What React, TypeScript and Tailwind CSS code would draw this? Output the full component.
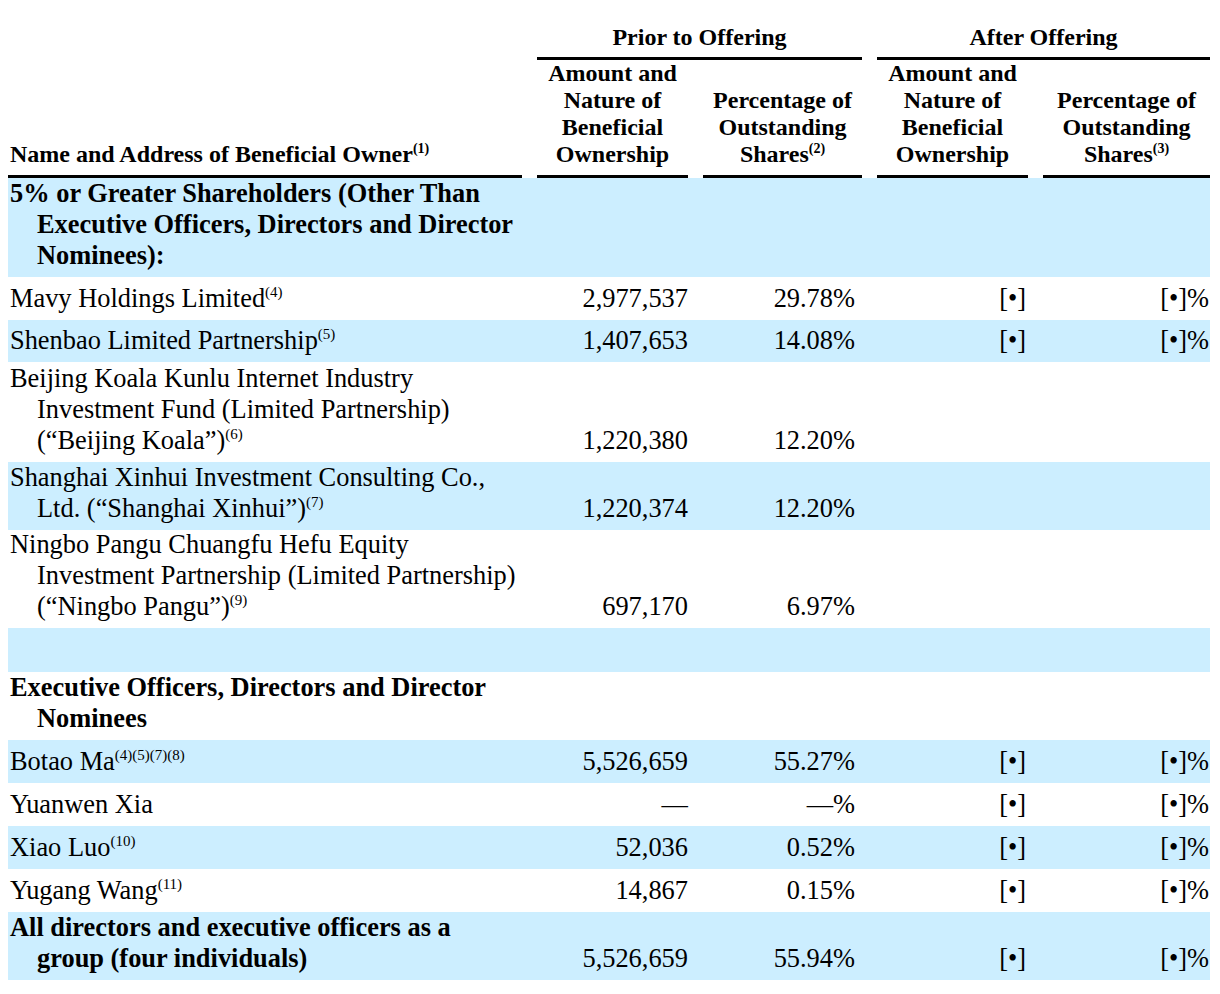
import React from "react";

const Sup = ({ children, h }: { children: React.ReactNode; h?: boolean }) => (
  <sup className={h ? "text-[14px] -top-[9px]" : "text-[15px] -top-[10px]"}>{children}</sup>
);

type RowProps = {
  blue?: boolean;
  h: string;
  bold?: boolean;
  name?: React.ReactNode;
  amt?: React.ReactNode;
  pct?: React.ReactNode;
  aAmt?: React.ReactNode;
  aPct?: React.ReactNode;
};

function Row({ blue, h, bold, name, amt, pct, aAmt, aPct }: RowProps) {
  return (
    <div
      className={`flex gap-[15px] items-end pb-[6px] leading-[31px] ${h} ${blue ? "bg-[#cceeff]" : ""}`}
    >
      <div className={`w-[514px] pl-[29px] indent-[-27px] whitespace-nowrap ${bold ? "font-bold" : ""}`}>{name}</div>
      <div className="w-[151px] text-right">{amt}</div>
      <div className="w-[159px] text-right pr-[7px]">{pct}</div>
      <div className="w-[151px] text-right pr-[2px]">{aAmt}</div>
      <div className="w-[167px] text-right pr-[1px]">{aPct}</div>
    </div>
  );
}

const B = "[•]";
const BP = "[•]%";

export default function App() {
  return (
    <div
      className="bg-white text-black pl-[8px] pt-[24px] min-h-[994px]"
      style={{ fontFamily: '"Liberation Serif", "Times New Roman", serif' }}
    >
      <div className="w-[1202px]">
        {/* Header */}
        <div className="flex gap-[15px] font-bold text-[24px] leading-[27px]">
          <div className="w-[514px] flex items-end border-b-[3px] border-black pl-[2px] pb-[7px] whitespace-nowrap">
            <span>
              Name and Address of Beneficial Owner<Sup h>(1)</Sup>
            </span>
          </div>
          <div className="w-[325px] flex flex-col">
            <div className="text-center pb-[6px] border-b-[3px] border-black">Prior to Offering</div>
            <div className="flex gap-[15px] flex-1">
              <div className="w-[151px] text-center border-b-[3px] border-black pb-[7px]">
                Amount and
                <br />
                Nature of
                <br />
                Beneficial
                <br />
                Ownership
              </div>
              <div className="w-[159px] text-center border-b-[3px] border-black pb-[7px] flex flex-col justify-end">
                <span>
                  Percentage of
                  <br />
                  Outstanding
                  <br />
                  Shares<Sup h>(2)</Sup>
                </span>
              </div>
            </div>
          </div>
          <div className="w-[333px] flex flex-col">
            <div className="text-center pb-[6px] border-b-[3px] border-black">After Offering</div>
            <div className="flex gap-[15px] flex-1">
              <div className="w-[151px] text-center border-b-[3px] border-black pb-[7px]">
                Amount and
                <br />
                Nature of
                <br />
                Beneficial
                <br />
                Ownership
              </div>
              <div className="w-[167px] text-center border-b-[3px] border-black pb-[7px] flex flex-col justify-end">
                <span>
                  Percentage of
                  <br />
                  Outstanding
                  <br />
                  Shares<Sup h>(3)</Sup>
                </span>
              </div>
            </div>
          </div>
        </div>

        {/* Body */}
        <div className="text-[26.4px]">
          <Row
            blue
            bold
            h="h-[99px]"
            name={
              <>
                5% or Greater Shareholders (Other Than
                <br />
                Executive Officers, Directors and Director
                <br />
                Nominees):
              </>
            }
          />
          <Row
            h="h-[43px]"
            name={
              <>
                Mavy Holdings Limited<Sup>(4)</Sup>
              </>
            }
            amt="2,977,537"
            pct="29.78%"
            aAmt={B}
            aPct={BP}
          />
          <Row
            blue
            h="h-[42px]"
            name={
              <>
                Shenbao Limited Partnership<Sup>(5)</Sup>
              </>
            }
            amt="1,407,653"
            pct="14.08%"
            aAmt={B}
            aPct={BP}
          />
          <Row
            h="h-[100px]"
            name={
              <>
                Beijing Koala Kunlu Internet Industry
                <br />
                Investment Fund (Limited Partnership)
                <br />
                (“Beijing Koala”)<Sup>(6)</Sup>
              </>
            }
            amt="1,220,380"
            pct="12.20%"
          />
          <Row
            blue
            h="h-[68px]"
            name={
              <>
                Shanghai Xinhui Investment Consulting Co.,
                <br />
                Ltd. (“Shanghai Xinhui”)<Sup>(7)</Sup>
              </>
            }
            amt="1,220,374"
            pct="12.20%"
          />
          <Row
            h="h-[98px]"
            name={
              <>
                Ningbo Pangu Chuangfu Hefu Equity
                <br />
                Investment Partnership (Limited Partnership)
                <br />
                (“Ningbo Pangu”)<Sup>(9)</Sup>
              </>
            }
            amt="697,170"
            pct="6.97%"
          />
          <Row blue h="h-[44px]" />
          <Row
            bold
            h="h-[68px]"
            name={
              <>
                Executive Officers, Directors and Director
                <br />
                Nominees
              </>
            }
          />
          <Row
            blue
            h="h-[43px]"
            name={
              <>
                Botao Ma<Sup>(4)(5)(7)(8)</Sup>
              </>
            }
            amt="5,526,659"
            pct="55.27%"
            aAmt={B}
            aPct={BP}
          />
          <Row h="h-[43px]" name="Yuanwen Xia" amt="—" pct="—%" aAmt={B} aPct={BP} />
          <Row
            blue
            h="h-[43px]"
            name={
              <>
                Xiao Luo<Sup>(10)</Sup>
              </>
            }
            amt="52,036"
            pct="0.52%"
            aAmt={B}
            aPct={BP}
          />
          <Row
            h="h-[43px]"
            name={
              <>
                Yugang Wang<Sup>(11)</Sup>
              </>
            }
            amt="14,867"
            pct="0.15%"
            aAmt={B}
            aPct={BP}
          />
          <Row
            blue
            bold
            h="h-[68px]"
            name={
              <>
                All directors and executive officers as a
                <br />
                group (four individuals)
              </>
            }
            amt="5,526,659"
            pct="55.94%"
            aAmt={B}
            aPct={BP}
          />
        </div>
      </div>
    </div>
  );
}
